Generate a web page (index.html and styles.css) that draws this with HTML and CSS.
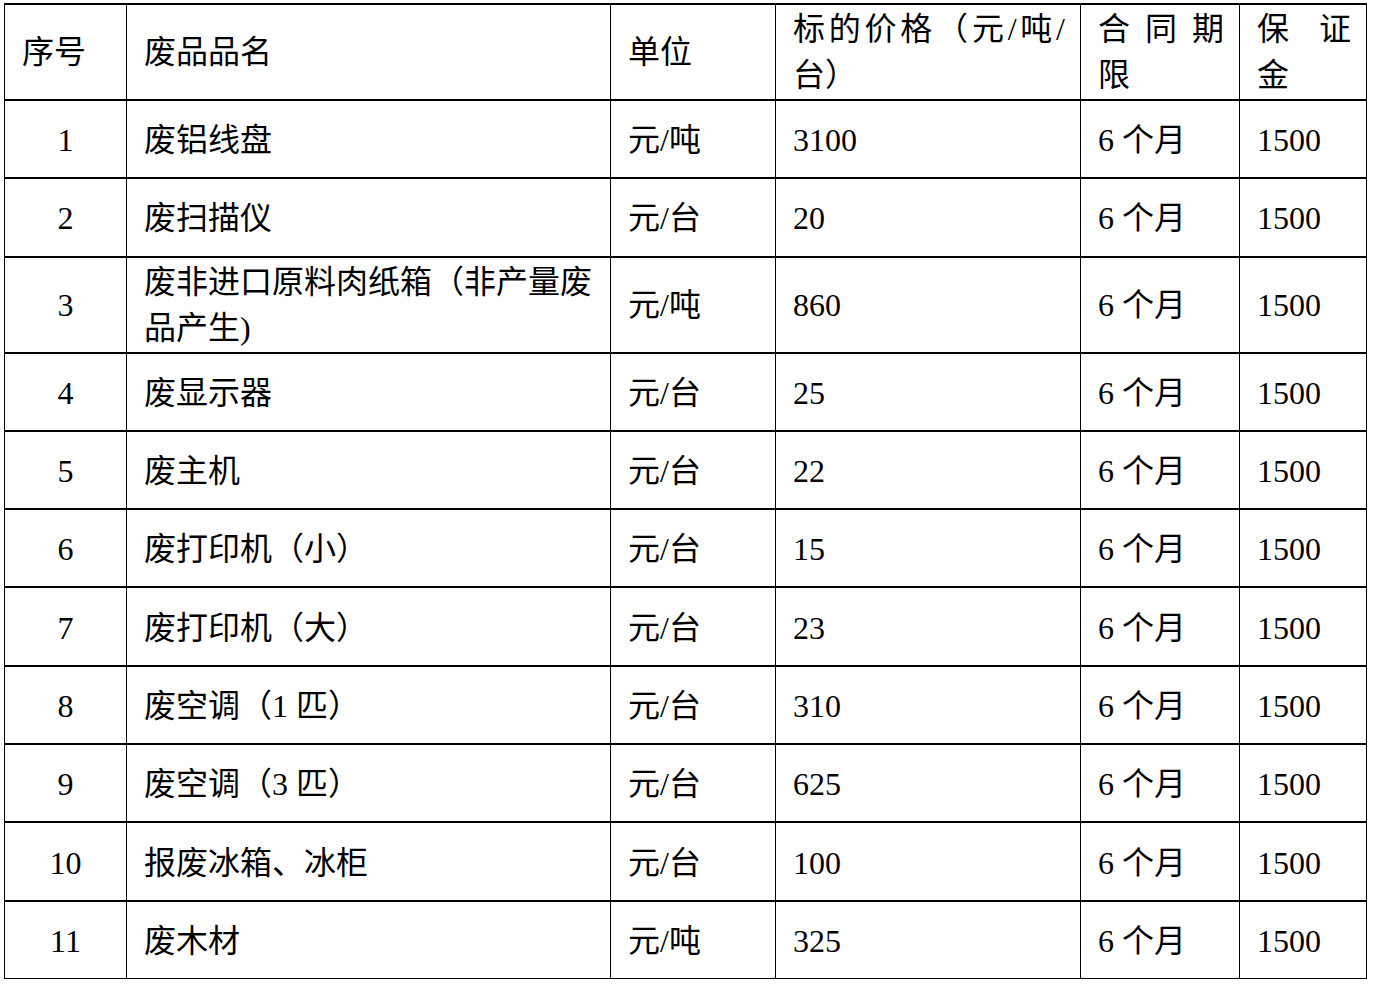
FILE: index.html
```html
<!DOCTYPE html>
<html lang="zh-CN">
<head>
<meta charset="utf-8">
<title>废品标的价格表</title>
<link rel="stylesheet" href="styles.css">
</head>
<body>
<table class="price-table">
  <colgroup>
    <col class="c-no">
    <col class="c-name">
    <col class="c-unit">
    <col class="c-price">
    <col class="c-term">
    <col class="c-deposit">
  </colgroup>
  <thead>
    <tr class="head-row">
      <th class="left">序号</th>
      <th>废品品名</th>
      <th>单位</th>
      <th class="just">标的价格（元/吨/台）</th>
      <th class="just">合同期限</th>
      <th class="just">保证金</th>
    </tr>
  </thead>
  <tbody>
    <tr><td class="num">1</td><td>废铝线盘</td><td>元/吨</td><td>3100</td><td>6 个月</td><td>1500</td></tr>
    <tr><td class="num">2</td><td>废扫描仪</td><td>元/台</td><td>20</td><td>6 个月</td><td>1500</td></tr>
    <tr class="tall"><td class="num">3</td><td>废非进口原料肉纸箱（非产量废品产生)</td><td>元/吨</td><td>860</td><td>6 个月</td><td>1500</td></tr>
    <tr><td class="num">4</td><td>废显示器</td><td>元/台</td><td>25</td><td>6 个月</td><td>1500</td></tr>
    <tr><td class="num">5</td><td>废主机</td><td>元/台</td><td>22</td><td>6 个月</td><td>1500</td></tr>
    <tr><td class="num">6</td><td>废打印机（小）</td><td>元/台</td><td>15</td><td>6 个月</td><td>1500</td></tr>
    <tr><td class="num">7</td><td>废打印机（大）</td><td>元/台</td><td>23</td><td>6 个月</td><td>1500</td></tr>
    <tr><td class="num">8</td><td>废空调（1 匹）</td><td>元/台</td><td>310</td><td>6 个月</td><td>1500</td></tr>
    <tr><td class="num">9</td><td>废空调（3 匹）</td><td>元/台</td><td>625</td><td>6 个月</td><td>1500</td></tr>
    <tr><td class="num">10</td><td>报废冰箱、冰柜</td><td>元/台</td><td>100</td><td>6 个月</td><td>1500</td></tr>
    <tr class="last"><td class="num">11</td><td>废木材</td><td>元/吨</td><td>325</td><td>6 个月</td><td>1500</td></tr>
  </tbody>
</table>
</body>
</html>
```

FILE: styles.css
```css
html, body {
  margin: 0;
  padding: 0;
  background: #ffffff;
}

body {
  padding: 3px 0 0 4px;
  font-family: "Liberation Serif", "Noto Sans CJK SC", serif;
  font-size: 32px;
  color: #000000;
}

.price-table {
  border-collapse: collapse;
  table-layout: fixed;
  width: 1363px;
}

.c-no { width: 122px; }
.c-name { width: 484px; }
.c-unit { width: 165px; }
.c-price { width: 305px; }
.c-term { width: 159px; }
.c-deposit { width: 127px; }

.price-table th,
.price-table td {
  border-top: 2px solid #000;
  border-bottom: 2px solid #000;
  border-left: 1px solid #000;
  border-right: 1px solid #000;
  padding: 2px 15px 0 17px;
  line-height: 46px;
  font-weight: normal;
  text-align: left;
  vertical-align: middle;
  height: 78.3px;
  box-sizing: border-box;
}

.price-table .head-row th {
  height: 94px;
  padding-top: 1px;
  padding-bottom: 1px;
}

.price-table th.just {
  text-align: justify;
  text-align-last: left;
}

.price-table td.num {
  text-align: center;
  padding-left: 0;
  padding-right: 0;
}

.price-table .tall td {
  height: 94px;
  padding-top: 1px;
  padding-bottom: 1px;
}

.price-table .last td {
  border-bottom: 1px solid #000;
}
```
